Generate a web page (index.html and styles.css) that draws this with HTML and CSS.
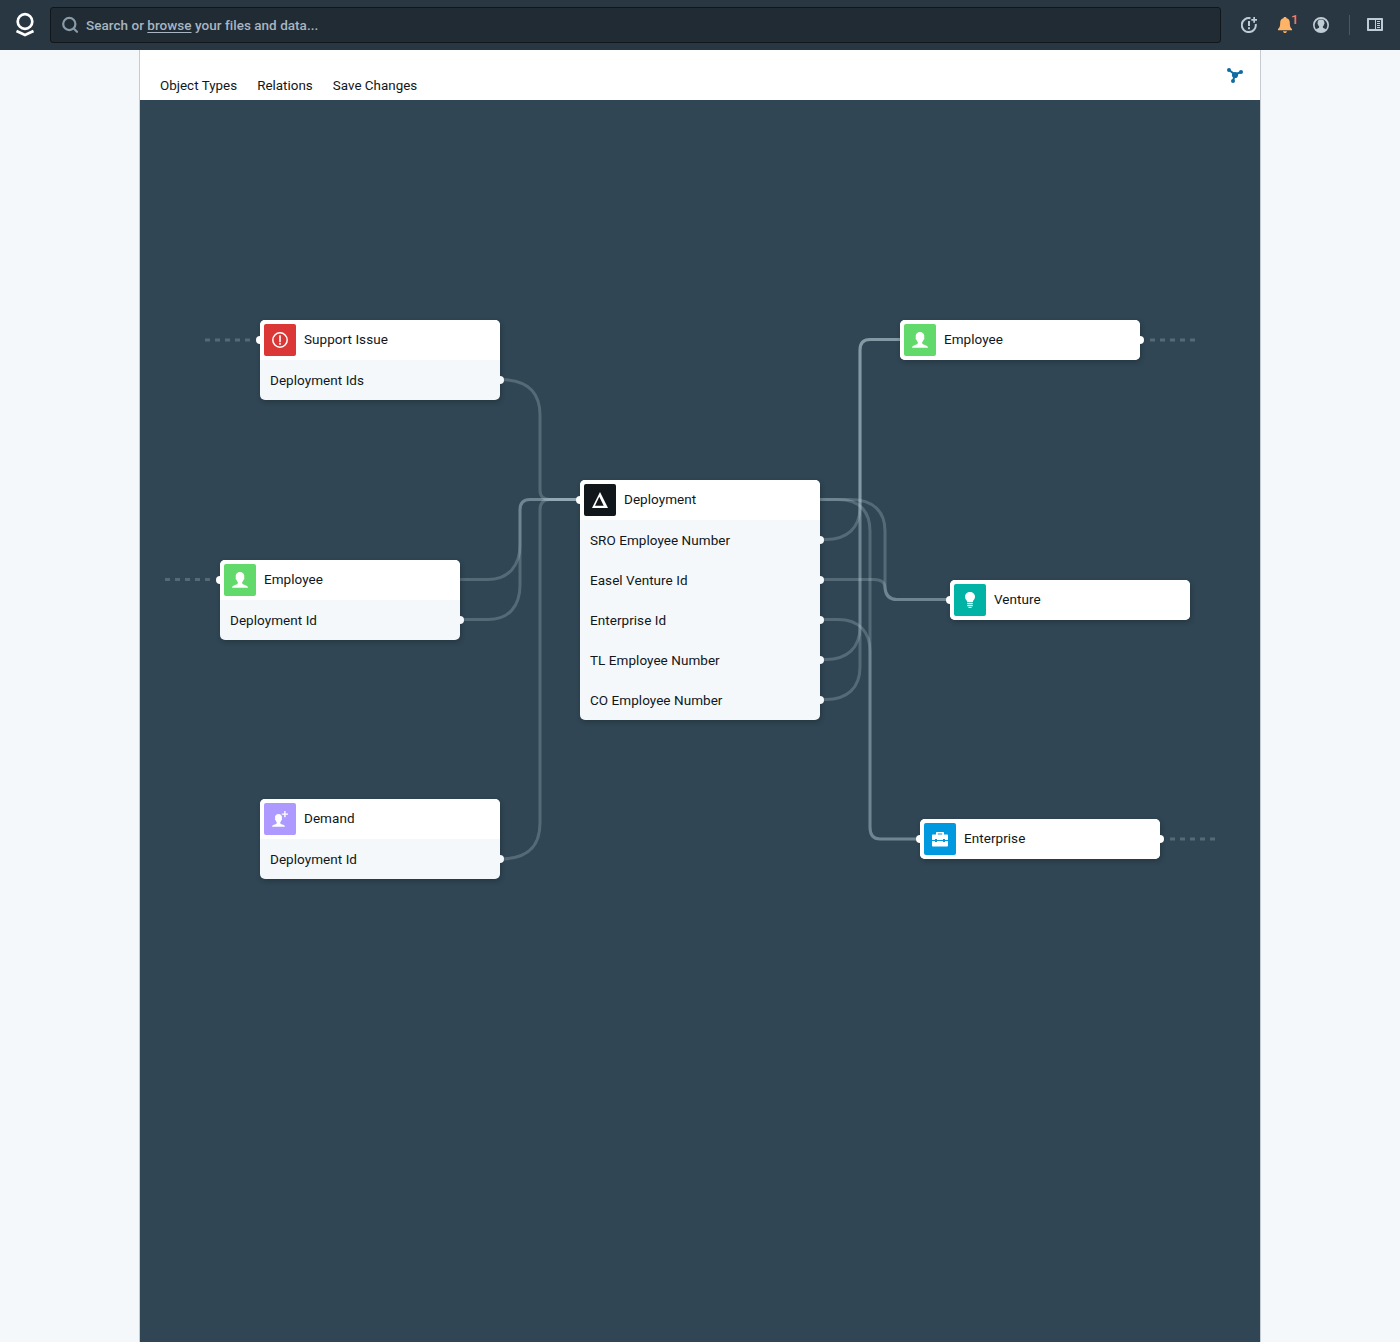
FILE: index.html
```html
<!DOCTYPE html>
<html lang="en">
<head>
<meta charset="utf-8">
<title>Object Types</title>
<link rel="stylesheet" href="styles.css">
</head>
<body>
<svg class="defs" width="0" height="0">
  <symbol id="person" viewBox="0 0 16 16"><path d="M8 0C5.400 0 3.700 1.700 3.700 4.100c0 .5.1.9.2 1.300-.5.200-.4 1.700.4 2.100.3 1.200.8 1.900 1.500 2.500v1.300c-.3 1-1.900 1.400-3.400 2C1.100 13.800.1 14.400 0 15.800h16c-.1-1.400-1.100-2-2.400-2.500-1.500-.6-3.100-1-3.400-2V10c.7-.6 1.200-1.300 1.500-2.500.8-.4.900-1.900.4-2.100.1-.4.200-.8.200-1.300C12.300 1.700 10.600 0 8 0z"/></symbol>
</svg>
<header class="topbar">
  <svg class="logo" viewBox="0 0 20 26" width="20" height="26"><circle cx="10" cy="9.500" r="7.300"/><path d="M1.500 19 10 23l8.500-4"/></svg>
  <div class="search">
    <svg class="search-icon" viewBox="0 0 18 18" width="18" height="18"><circle cx="7.300" cy="8" r="6.100"/><path d="m12.200 13 2.800 2.800"/></svg>
    <span class="search-text">Search or <u>browse</u> your files and data...</span>
  </div>
  <nav class="tools">
    <svg viewBox="0 0 16 16" width="16" height="16"><path class="line" d="M9.500 1.300A7 7 0 1 0 14.700 7"/><path d="M7 4h2v5H7zM7 10.300h2v2H7zM12.300 0h1.700v2h2v1.700h-2v2h-1.700v-2h-2V2h2z"/></svg>
    <span class="bell">
      <svg viewBox="0 0 16 16" width="16" height="16"><path d="M8 0c-.9 0-1.500.5-1.600 1.200C4.300 1.700 3.200 3.400 3.200 5.500c0 4-.7 5.300-2.200 6.500v1.200h14V12c-1.500-1.200-2.200-2.500-2.200-6.500 0-2.100-1.100-3.800-3.200-4.300C9.500.5 8.900 0 8 0zM6 14.200C6.200 15.300 7 16 8 16s1.800-.7 2-1.800z"/></svg>
      <span class="badge">1</span>
    </span>
    <svg viewBox="0 0 16 16" width="16" height="16"><path fill-rule="evenodd" d="M8 0a8 8 0 1 0 0 16A8 8 0 0 0 8 0zm4.900 12.200c-.6-.5-2.600-.9-3-1.700V9.300c.5-.4.900-1 1.100-1.900.6-.4.700-1.300.3-1.500C11.600 3.600 10.300 2.500 8 2.500S4.400 3.600 4.700 5.900c-.4.200-.3 1.100.3 1.500.2.900.6 1.500 1.100 1.900v1.200c-.4.800-2.400 1.200-3 1.700a6.500 6.500 0 0 1-.7-1A6.300 6.300 0 1 1 13.600 11.200c-.2.400-.4.700-.7 1z"/></svg>
    <span class="divider"></span>
    <svg viewBox="0 0 16 16" width="16" height="16"><path fill-rule="evenodd" d="M1 1h14c.6 0 1 .4 1 1v11c0 .6-.4 1-1 1H1c-.6 0-1-.4-1-1V2c0-.6.4-1 1-1zm1 2v9h6V3zm7 0v9h5V3zm1 1h3v1h-3zm0 2h3v1h-3zm0 2h3v1h-3zm0 2h3v1h-3z"/></svg>
  </nav>
</header>
<main class="workspace">
  <div class="menu">
    <div class="menu-items"><span>Object Types</span><span>Relations</span><span>Save Changes</span></div>
    <svg class="graph-icon" viewBox="0 0 16 16" width="16" height="16"><path class="stem" d="M2 2 8 6.500l6-2.500M8 6.500 6 13"/><circle cx="2" cy="2" r="2"/><circle cx="14" cy="3.900" r="2"/><circle cx="8" cy="7" r="3.100"/><circle cx="6" cy="13" r="2"/></svg>
  </div>
  <div class="canvas">
    <svg class="edges" viewBox="140 100 1120 1242" width="1120" height="1242">
      <path d="M500 379.500C525 379.500 540 390 540 415V490Q540 499.500 550 499.500H580"/>
      <path d="M500 859C525 859 540 849 540 823V510Q540 499.500 550 499.500H580"/>
      <path d="M460 579.500H488C509 579.500 520 565 520 545V510Q520 499.500 530 499.500H580"/>
      <path d="M460 619.500H488C509 619.500 520 606 520 585V510Q520 499.500 530 499.500H580"/>
      <path d="M820 499.500H850C874 499.500 885 512 885 531V588Q886 599.500 897 599.500H950"/>
      <path d="M820 499.500H838C860 499.500 870 512 870 531V827Q870 839 880 839H920"/>
      <path d="M820 539.500H826C847 539.500 860 528 860 507V350Q860 339.500 870 339.500H900"/>
      <path d="M820 659.500H826C847 659.500 860 648 860 627V350Q860 339.500 870 339.500H900"/>
      <path d="M820 699.500H826C847 699.500 860 688 860 667V350Q860 339.500 870 339.500H900"/>
      <path d="M820 579.500H874Q885 579.500 885 588Q886 599.500 897 599.500H950"/>
      <path d="M820 619.500H838C860 619.500 870 633 870 651V827Q870 839 880 839H920"/>
      <path class="dashed" d="M205 340H250M1150 340H1195M165 579.500H210M1170 839H1215"/>
    </svg>

    <section class="node support">
      <div class="head port-in"><span class="icon red"><svg viewBox="0 0 16 16" width="16" height="16"><circle class="ring" cx="8" cy="8" r="7.200"/><path d="M7.200 3.200h1.600v7H7.200zM7.200 11h1.600v1.700H7.200z"/></svg></span><span>Support Issue</span></div>
      <div class="row port-out">Deployment Ids</div>
    </section>
    <section class="node employee-left">
      <div class="head port-in"><span class="icon green"><svg width="16" height="16"><use href="#person"/></svg></span><span>Employee</span></div>
      <div class="row port-out">Deployment Id</div>
    </section>
    <section class="node demand">
      <div class="head"><span class="icon violet"><svg viewBox="0 0 16 16" width="16" height="16"><use href="#person" x="0" y="3" width="13" height="13"/><path d="M12.200 0h1.400v2.400H16v1.400h-2.400v2.400h-1.400V3.800H9.800V2.400h2.400z"/></svg></span><span>Demand</span></div>
      <div class="row port-out">Deployment Id</div>
    </section>
    <section class="node deployment">
      <div class="head port-in"><span class="icon black"><svg viewBox="0 0 16 16" width="16" height="16"><path fill-rule="evenodd" d="M8 0 16 16H0zM7.300 4.700 3 13.800h8.700z"/></svg></span><span>Deployment</span></div>
      <div class="row port-out">SRO Employee Number</div>
      <div class="row port-out">Easel Venture Id</div>
      <div class="row port-out">Enterprise Id</div>
      <div class="row port-out">TL Employee Number</div>
      <div class="row port-out">CO Employee Number</div>
    </section>
    <section class="node employee-right">
      <div class="head port-out"><span class="icon green"><svg width="16" height="16"><use href="#person"/></svg></span><span>Employee</span></div>
    </section>
    <section class="node venture">
      <div class="head port-in"><span class="icon teal"><svg viewBox="0 0 16 16" width="16" height="16"><path d="M8 0C5.200 0 3 2.100 3 4.800 3 7.500 5 8 5.300 10.200h5.400C11 8 13 7.500 13 4.800 13 2.100 10.800 0 8 0zM5.300 11h5.400v1.300H5.300zM5.300 13h5.400v1.300H5.300zM6.200 15h3.600l-.6 1H6.800z"/></svg></span><span>Venture</span></div>
    </section>
    <section class="node enterprise">
      <div class="head port-in port-out"><span class="icon blue"><svg viewBox="0 0 16 16" width="16" height="16"><path fill-rule="evenodd" d="M4 3.500V2c0-.6.400-1 1-1h6c.6 0 1 .4 1 1v1.500h3c.6 0 1 .4 1 1V9h-3V8h-2v1H5V8H3v1H0V4.500c0-.6.4-1 1-1zm1.800 0h4.400v-1H5.800zM0 10h3v1h2v-1h6v1h2v-1h3v4.500c0 .6-.4 1-1 1H1c-.6 0-1-.4-1-1z"/></svg></span><span>Enterprise</span></div>
    </section>
  </div>
</main>
</body>
</html>
```
FILE: styles.css
```css
* { box-sizing: border-box; }
body {
  margin: 0;
  height: 1342px;
  display: flex;
  flex-direction: column;
  overflow: hidden;
  background: #f5f8fa;
  color: #10161a;
  font: 14px/20px Roboto, "Liberation Sans", sans-serif;
}
svg { display: block; flex: none; }
.defs { position: absolute; }

.topbar {
  height: 50px;
  flex: none;
  display: flex;
  align-items: center;
  padding: 0 17px 0 15px;
  background: #293742;
}
.logo { fill: none; stroke: #fff; stroke-width: 2.700; }
.search {
  flex: 1;
  height: 36px;
  margin-left: 15px;
  padding-left: 11px;
  display: flex;
  align-items: center;
  gap: 6px;
  border: 1px solid #10161a;
  border-radius: 3px;
  background: #202b33;
}
.search-icon { fill: none; stroke: #8a9ba8; stroke-width: 2.200; stroke-linecap: round; }
.search-text { color: #a7b6c2; font-weight: 500; font-size: 13.500px; letter-spacing: .03px; }
.search-text u { text-underline-offset: 2px; }
.tools { display: flex; align-items: center; gap: 20px; padding-left: 20px; fill: #bfccd6; }
.tools .line { fill: none; stroke: #bfccd6; stroke-width: 2; }
.bell { position: relative; fill: #ffb366; }
.badge { position: absolute; left: 14px; top: -7px; font-size: 13px; line-height: 20px; font-weight: 500; color: #ff7a66; }
.divider { width: 1px; height: 20px; margin-right: -3px; background: #4a5863; }

.workspace {
  width: 1122px;
  margin: 0 auto;
  flex: 1;
  border: solid #c5cbd0;
  border-width: 0 1px;
}
.menu {
  height: 50px;
  display: flex;
  justify-content: space-between;
  align-items: flex-start;
  padding: 18px 17px 0 20px;
  background: #fff;
}
.menu-items { display: flex; gap: 20px; padding-top: 8px; font-size: 13.400px; letter-spacing: .02px; }
.graph-icon { fill: #106ba3; }
.graph-icon .stem { fill: none; stroke: #106ba3; stroke-width: 2; }

.canvas { position: relative; height: 1242px; background: #304654; }
.edges { position: absolute; inset: 0; fill: none; stroke: rgba(190, 215, 225, .25); stroke-width: 3; }
.dashed { stroke-dasharray: 5; }

.node {
  position: absolute;
  width: 240px;
  border-radius: 5px;
  background: #f5f8fa;
  box-shadow: 1px 2px 5px rgba(16, 22, 26, .32);
  font-size: 13.500px;
  letter-spacing: .05px;
}
.support { left: 120px; top: 220px; }
.employee-left { left: 80px; top: 460px; }
.demand { left: 120px; top: 699px; }
.deployment { left: 440px; top: 380px; }
.employee-right { left: 760px; top: 220px; }
.venture { left: 810px; top: 480px; }
.enterprise { left: 780px; top: 719px; }

.head, .row { position: relative; height: 40px; display: flex; align-items: center; }
.head { gap: 8px; padding: 0 4px; background: #fff; border-radius: 5px 5px 0 0; }
.head > span:last-child { padding-bottom: 2px; }
.head:last-child { border-radius: 5px; }
.row { padding: 0 10px; }
.port-in::before, .port-out::after {
  content: "";
  position: absolute;
  top: 16px;
  width: 8px;
  height: 8px;
  border-radius: 50%;
  background: #fff;
}
.port-in::before { left: -4px; }
.port-out::after { right: -4px; }
.row.port-out::after { background: #f5f8fa; }

.icon {
  position: relative;
  width: 32px;
  height: 32px;
  display: grid;
  place-items: center;
  border-radius: 2px;
  fill: #fff;
}
.ring { fill: none; stroke: #fff; stroke-width: 1.500; }
.red { background: #db3737; }
.green { background: #62d96b; }
.violet { background: #ad99ff; }
.black { background: #10161a; }
.teal { background: #00b3a4; }
.blue { background: #0099e0; }
```
